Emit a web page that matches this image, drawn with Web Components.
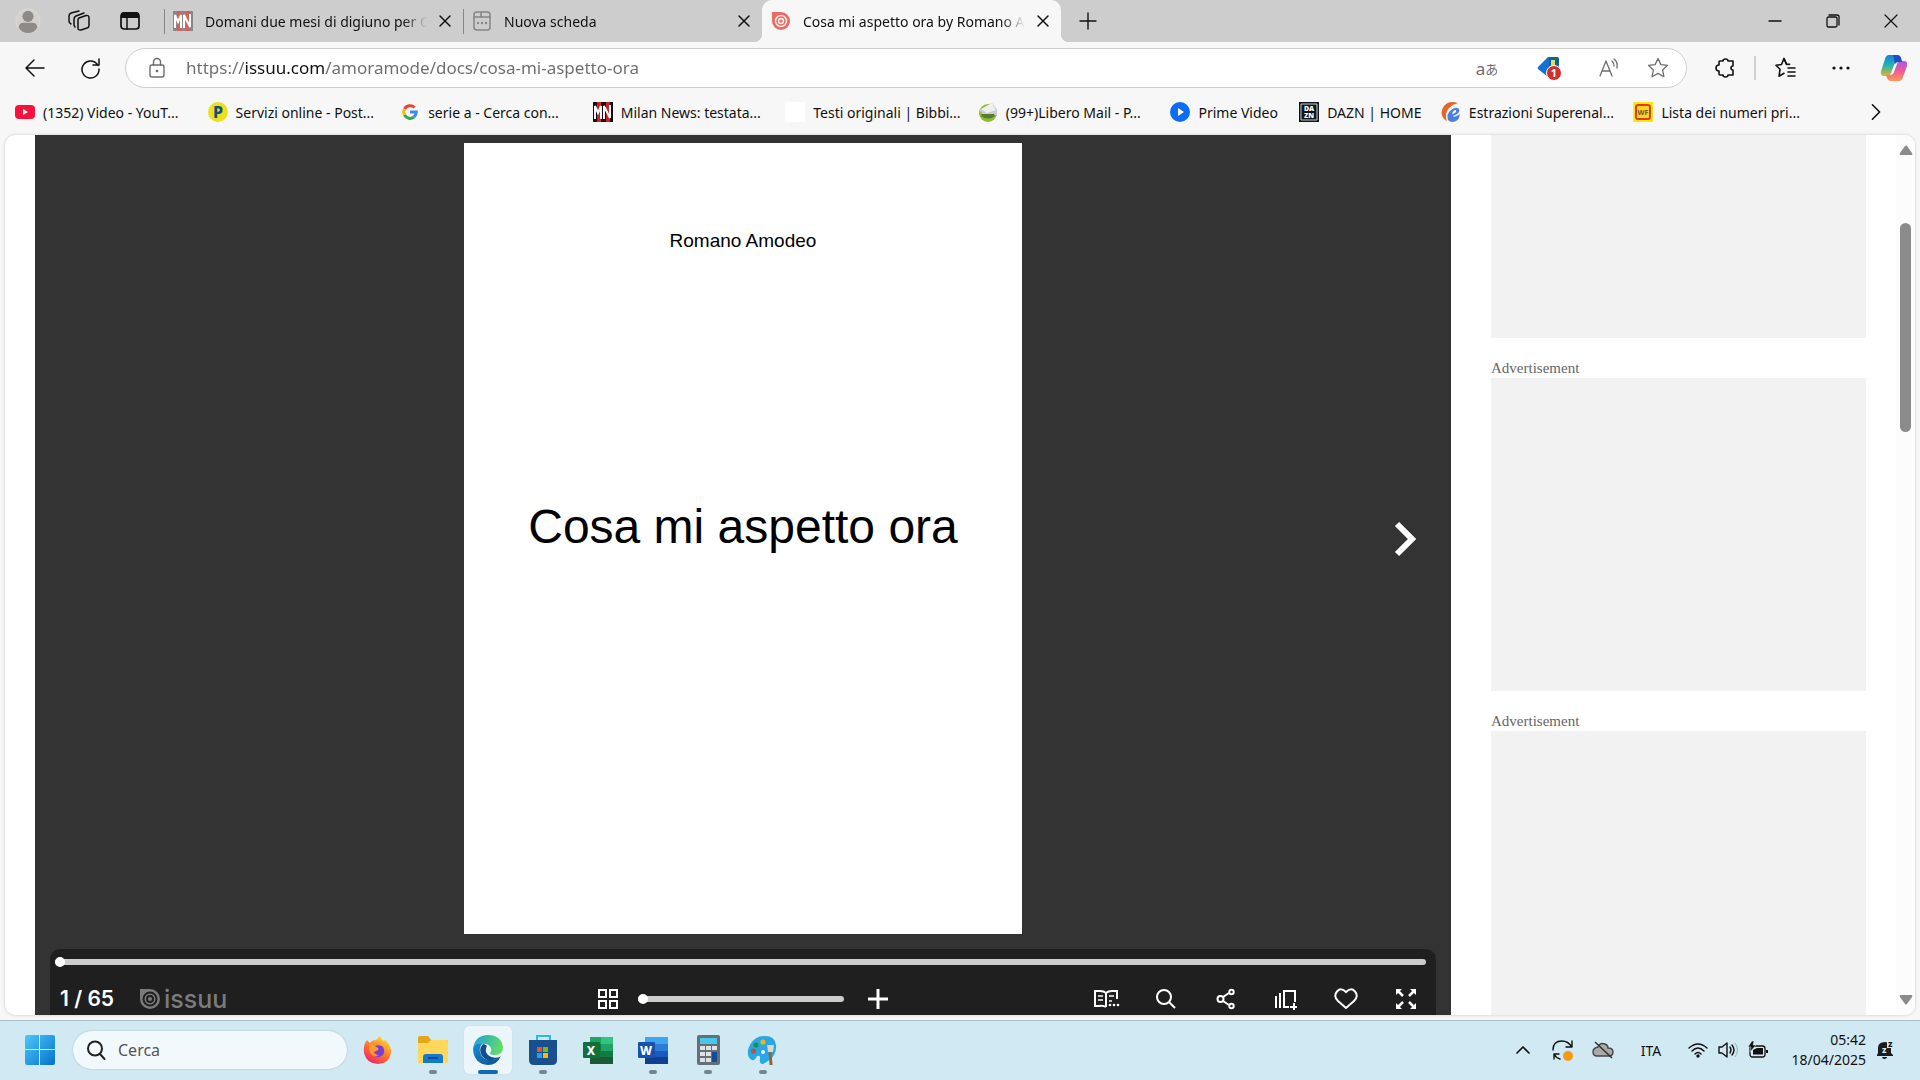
<!DOCTYPE html>
<html lang="it">
<head>
<meta charset="utf-8">
<title>Cosa mi aspetto ora by Romano Amodeo - Issuu</title>
<style>
  body {
    margin: 0;
    height: 100vh;
    display: flex;
    flex-direction: column;
    overflow: hidden;
    background: #f7f7f7;
    color: #111;
    font-family: "Noto Sans", "Open Sans", sans-serif;
    font-size: 14px;
  }
</style>
</head>
<body>
<tab-strip>
  <browser-tab icon="mn-faded">Domani due mesi di digiuno per Gaza</browser-tab>
  <browser-tab icon="new-page">Nuova scheda</browser-tab>
  <browser-tab icon="issuu-tab" active>Cosa mi aspetto ora by Romano Amodeo</browser-tab>
</tab-strip>
<nav-bar></nav-bar>
<favorites-bar>
  <fav-link icon="youtube">(1352) Video - YouT...</fav-link>
  <fav-link icon="poste">Servizi online - Post...</fav-link>
  <fav-link icon="google">serie a - Cerca con...</fav-link>
  <fav-link icon="mn">Milan News: testata...</fav-link>
  <fav-link icon="blank">Testi originali | Bibbi...</fav-link>
  <fav-link icon="libero">(99+)Libero Mail - P...</fav-link>
  <fav-link icon="prime">Prime Video</fav-link>
  <fav-link icon="dazn">DAZN | HOME</fav-link>
  <fav-link icon="superenalotto">Estrazioni Superenal...</fav-link>
  <fav-link icon="wf">Lista dei numeri pri...</fav-link>
</favorites-bar>
<web-page>
  <doc-viewer>
    <span slot="author">Romano Amodeo</span>
    <span slot="title">Cosa mi aspetto ora</span>
  </doc-viewer>
  <ad-slot slot="ads" short></ad-slot>
  <ad-slot slot="ads">Advertisement</ad-slot>
  <ad-slot slot="ads">Advertisement</ad-slot>
</web-page>
<task-bar></task-bar>

<script>
const round = 'fill="none" stroke-linecap="round" stroke-linejoin="round"';
const line = `${round} stroke="currentColor"`;

const icons = {
  profile: `<svg viewBox="0 0 28 28"><circle cx="14" cy="14" r="13" fill="#d4d0cc" stroke="#dedad6"/><circle cx="14" cy="9" r="6" fill="#8d8a87"/><path d="M4 21c0-3 2-5 5-5h10c3 0 5 2 5 5-2 4-6 6-10 6s-8-2-10-6z" fill="#8d8a87"/></svg>`,
  workspaces: `<svg viewBox="0 0 22 22"><g ${line} stroke-width="1.5"><path d="M11 8l7-2.500q3-.5 3 2v8q0 2-2 2.500l-6 2q-3 .5-3-2v-8q0-1.500 1-2z"/><path d="M7 17q-1-1-1-3V9q0-2 2-3l8-3"/><path d="M3 14q-2-1-2-3V6q0-2 2-3l8-2"/></g></svg>`,
  sidetabs: `<svg viewBox="0 0 20 20"><rect x="1" y="2" width="18" height="16" rx="3" ${line} stroke-width="1.700"/><path d="M1 7V4q0-3 3-3h12q3 0 3 3v3z" fill="currentColor"/><path d="M7 7v11" ${line} stroke-width="1.500"/></svg>`,
  "new-page": `<svg viewBox="0 0 20 20"><g ${round} stroke-width="1.500" stroke="#858585"><rect x="2" y="1" width="16" height="18" rx="3"/><path d="M2 6h7V2M9 6h9"/></g><g fill="#858585"><circle cx="6" cy="12" r="1.200"/><circle cx="10" cy="12" r="1.200"/><circle cx="14" cy="12" r="1.200"/></g></svg>`,
  "issuu-tab": `<svg viewBox="0 0 20 20"><path d="M1 1h9a9 9 0 1 1-9 9z" fill="#ea6b62"/><circle cx="10" cy="10" r="5.500" fill="none" stroke="#f9e9e8" stroke-width="1.500"/><circle cx="10" cy="10" r="2.400" fill="none" stroke="#f9e9e8" stroke-width="1.600"/></svg>`,
  close: `<svg viewBox="0 0 12 12"><path d="M1 1l10 10M11 1L1 11" ${line} stroke-width="1.500"/></svg>`,
  plus: `<svg viewBox="0 0 18 18"><path d="M9 1v16M1 9h16" ${line} stroke-width="1.400"/></svg>`,
  minimize: `<svg viewBox="0 0 14 14"><path d="M1 7h12" ${line} stroke-width="1.300"/></svg>`,
  restore: `<svg viewBox="0 0 14 14"><g ${line} stroke-width="1.300"><rect x="1" y="3" width="10" height="10" rx="1.500"/><path d="M3 1h8q2 0 2 2v8"/></g></svg>`,
  exit: `<svg viewBox="0 0 14 14"><path d="M1 1l12 12M13 1L1 13" ${line} stroke-width="1.200"/></svg>`,
  back: `<svg viewBox="0 0 20 20"><path d="M19 10H1M9 2l-8 8 8 8" ${line} stroke-width="1.500"/></svg>`,
  reload: `<svg viewBox="0 0 20 20"><path d="M18 7.500A8.500 8.500 0 1 0 19 11M19 1v6h-6" ${line} stroke-width="1.500"/></svg>`,
  lock: `<svg viewBox="0 0 20 20"><g ${line} stroke-width="1.400"><rect x="3" y="7" width="14" height="12" rx="2"/><path d="M6.500 7V4a3.500 3.500 0 0 1 7 0v3"/></g><circle cx="10" cy="13" r="1.300" fill="currentColor"/></svg>`,
  tag: `<svg viewBox="0 0 26 26"><path d="M2 12L12 2h8q3 0 3 3v17H12L2 14q-1-1 0-2z" fill="#1572d3"/><path d="M13 2h8q2 0 2 3v5H13z" fill="#12618e"/><path d="M15 5h4v7h-4z" fill="#d8dc6a"/><circle cx="18" cy="18" r="7.500" fill="#d02f2a" stroke="#fff"/><text x="18" y="22" text-anchor="middle" font-size="11" font-weight="700" fill="#fff">1</text></svg>`,
  read: `<svg viewBox="0 0 20 20"><path d="M1 18L7 3l6 15M3 13h8M13 3q2 2 2 5M15 1q4 3 3 9" ${line} stroke-width="1.300"/></svg>`,
  star: `<svg viewBox="0 0 22 22"><path d="M11 1.500l2.900 6.100 6.600.8-4.900 4.600 1.300 6.700-5.900-3.300-5.900 3.300 1.300-6.700L1.500 8.400l6.600-.8z" ${line} stroke-width="1.300"/></svg>`,
  puzzle: `<svg viewBox="0 0 20 20"><path d="M5 3h3q0-2 2.500-2T13 3h5v5q-2 0-2 2t2 2v5h-5q0 2-2.500 2T8 17H5q-1 0-1-1v-3q-3 0-3-3t3-3V4q0-1 1-1z" ${line} stroke-width="1.600"/></svg>`,
  favorites: `<svg viewBox="0 0 22 22"><g ${line} stroke-width="1.600"><path d="M12 7.500h-.5L9 1.500 6.500 7.500 1 8.300l4 4-1 7 5-3"/><path d="M9 1.500l2.500 5.500 3 .4M13 11h7M13 15h7M13 19h7"/></g></svg>`,
  more: `<svg viewBox="0 0 20 20"><g fill="currentColor"><circle cx="3" cy="10" r="1.600"/><circle cx="10" cy="10" r="1.600"/><circle cx="17" cy="10" r="1.600"/></g></svg>`,
  copilot: `<svg viewBox="0 0 28 28"><defs>
    <linearGradient id="a" x2="0" y2="1"><stop offset="0" stop-color="#1b7fe0"/><stop offset=".5" stop-color="#20b7b0"/><stop offset="1" stop-color="#e8b22c"/></linearGradient>
    <linearGradient id="b" x2="0" y2="1"><stop offset="0" stop-color="#a45be8"/><stop offset=".5" stop-color="#ef5a95"/><stop offset="1" stop-color="#ff9a55"/></linearGradient></defs>
    <path d="M9 1h8q3 0 4 3l1 4h-4q-3 0-4 3l-3 8q-1 3-4 3H4q-4 0-3-5L5 5q1-4 4-4z" fill="url(#a)"/>
    <path d="M19 27h-8q-3 0-4-3l-1-3h4q3 0 4-3l3-8q1-3 4-3h3q4 0 3 5l-4 11q-1 4-4 4z" fill="url(#b)"/>
    <path d="M13 1h4q3 0 4 3l1 4h-4q-2 0-3 2z" fill="#1f4fc4"/></svg>`,
  youtube: `<svg viewBox="0 0 20 20"><rect y="3" width="20" height="14" rx="4" fill="#f6123d"/><path d="M8 7l5 3-5 3z" fill="#fff"/></svg>`,
  poste: `<svg viewBox="0 0 20 20"><circle cx="10" cy="10" r="10" fill="#ece01c"/><text x="10" y="16" text-anchor="middle" font-size="16" font-weight="800" fill="#124f80">P</text></svg>`,
  google: `<svg viewBox="0 0 20 20"><g fill="none" stroke-width="3"><path d="M14.500 5.500A6.300 6.300 0 0 0 4.500 7" stroke="#ea4335"/><path d="M4.500 7a6.300 6.300 0 0 0 0 6" stroke="#fbbc05"/><path d="M4.500 13a6.300 6.300 0 0 0 9.500 2" stroke="#34a853"/><path d="M14 15q2.300-2 2.300-5H10" stroke="#4285f4"/></g></svg>`,
  mn: `<svg viewBox="0 0 20 20"><path d="M0 0h20v20H0z" fill="#180808"/><path d="M4 0h4v20H4zM13 0h4v20h-4z" fill="#d21e28"/><path d="M2 17V4l3 7 3-7v13M11 17V4l6 12V3" fill="none" stroke="#fff" stroke-width="2"/></svg>`,
  blank: `<svg viewBox="0 0 20 20"><path d="M0 0h20v20H0z" fill="#fff"/></svg>`,
  libero: `<svg viewBox="0 0 20 20"><circle cx="10" cy="11" r="9" fill="#8dbb2f"/><path d="M1 8L14 1l5 6v6L6 14z" fill="#c9cdd0"/><path d="M3 7l11-6 4 7-9 3z" fill="#eceeef"/><path d="M3 14q7 5 14 0l-1-2H4z" fill="#5a7b32"/></svg>`,
  prime: `<svg viewBox="0 0 20 20"><circle cx="10" cy="10" r="10" fill="#0c6df2"/><path d="M8 6l6 4-6 4z" fill="#fff"/></svg>`,
  dazn: `<svg viewBox="0 0 20 20"><path d="M0 0h20v20H0z" fill="#0c161b"/><path d="M2 2h16v16H2z" fill="none" stroke="#c8ced0"/><g fill="#fff" font-size="7" font-weight="900" text-anchor="middle"><text x="10" y="9">DA</text><text x="10" y="16">ZN</text></g></svg>`,
  superenalotto: `<svg viewBox="0 0 20 20"><path d="M17 1Q8-2 3 4-2 11 3 17l3 2Q3 12 8 6q4-4 9-5z" fill="#e4672a"/><path d="M7 18q-2-6 3-10 5-4 8-1 2 4-6 7 1 2 7-2-1 8-8 8-2 0-4-2zm4-6q5-1 4-4-3 0-4 4z" fill="#4c80dd"/></svg>`,
  wf: `<svg viewBox="0 0 20 20"><path d="M0 0h20v20H0z" fill="#ffe80a"/><rect x="3" y="3" width="14" height="14" rx="2" fill="#ffd22a" stroke="#df3b16" stroke-width="2"/><text x="10" y="13" text-anchor="middle" font-size="7" font-weight="800" fill="#77612b">WF</text></svg>`,
  chevron: `<svg viewBox="0 0 20 20"><path d="M6 2l8 8-8 8" ${line} stroke-width="1.800"/></svg>`,
  next: `<svg viewBox="0 0 24 36"><path d="M4 3l15 15L4 33" fill="none" stroke="#fff" stroke-width="6"/></svg>`,
  issuu: `<svg viewBox="0 0 20 20"><path d="M0 0h10a10 10 0 1 1-10 10z" fill="#7b7b7b"/><circle cx="10" cy="10" r="6.500" fill="none" stroke="#1f1f1f" stroke-width="2"/><circle cx="10" cy="10" r="3" fill="none" stroke="#1f1f1f" stroke-width="2"/></svg>`,
  grid: `<svg viewBox="0 0 20 20"><path d="M1 1h7v7H1zM12 1h7v7h-7zM1 12h7v7H1zM12 12h7v7h-7z" fill="none" stroke="currentColor" stroke-width="2"/></svg>`,
  "zoom-in": `<svg viewBox="0 0 20 20"><path d="M10 0v20M0 10h20" fill="none" stroke="currentColor" stroke-width="3"/></svg>`,
  book: `<svg viewBox="0 0 26 20"><g fill="none" stroke="currentColor" stroke-width="2"><path d="M13 18q-3-2-7-1H2V2h5q4 0 6 2v14M13 4q2-2 6-2h5v8"/><path d="M5 7h5M5 11h5M16 7h5M16 12h3" stroke-width="1.700"/></g><g fill="currentColor"><circle cx="17" cy="16" r="1.300"/><circle cx="21" cy="16" r="1.300"/><circle cx="25" cy="16" r="1.300"/></g></svg>`,
  find: `<svg viewBox="0 0 20 20"><g fill="none" stroke="currentColor" stroke-width="2"><circle cx="8" cy="8" r="7"/><path d="M13 13l6 6"/></g></svg>`,
  share: `<svg viewBox="0 0 20 20"><g fill="none" stroke="currentColor" stroke-width="2"><circle cx="4.500" cy="10" r="3"/><circle cx="15.500" cy="3" r="2.200"/><circle cx="15.500" cy="17" r="2.200"/><path d="M7 8l6-4M7 12l6 4"/></g></svg>`,
  stack: `<svg viewBox="0 0 24 22"><g fill="none" stroke="currentColor" stroke-width="2"><path d="M2 8v12M6 5v15M15 19h-5V3h11v11M20 15v7M16 19h7"/></g></svg>`,
  heart: `<svg viewBox="0 0 24 22"><path d="M12 20L4 13Q-1 8 3 3.500t9 .5q5-5 9-.5t-1 9.500z" fill="none" stroke="currentColor" stroke-width="2"/></svg>`,
  fullscreen: `<svg viewBox="0 0 20 20"><path d="M0 0h6L0 6zM20 0v6l-6-6zM0 20v-6l6 6zM20 20h-6l6-6z" fill="currentColor"/><path d="M2 2l5 5M18 2l-5 5M2 18l5-5M18 18l-5-5" stroke="currentColor" stroke-width="2.500"/></svg>`,
  windows: `<svg viewBox="0 0 30 30"><defs><linearGradient id="a" x2="1" y2="1"><stop offset="0" stop-color="#4cc8f8"/><stop offset="1" stop-color="#0571cf"/></linearGradient></defs><path d="M2 0h12v14H0V2q0-2 2-2zM15 0h13q2 0 2 2v12H15zM0 15h14v15H2q-2 0-2-2zM15 15h15v13q0 2-2 2H15z" fill="url(#a)"/></svg>`,
  search: `<svg viewBox="0 0 20 20"><g fill="none" stroke="#222" stroke-width="2" stroke-linecap="round"><circle cx="9" cy="8.500" r="7"/><path d="M14 14l4.500 5"/></g></svg>`,
  firefox: `<svg viewBox="0 0 30 30"><defs><linearGradient id="a" x1=".8" x2=".2" y2="1"><stop offset="0" stop-color="#ffe23c"/><stop offset=".5" stop-color="#ff7a2a"/><stop offset="1" stop-color="#ee1d6f"/></linearGradient></defs><path d="M4 5l3 3q2-3 6-3 2-1 3-4 2 1 4 5l2-1q7 6 6 13-2 11-13 11T1 18Q0 10 4 5z" fill="url(#a)"/><path d="M11 12q3-3 8-1 3 3 2 7-2 4-6 4-5-1-6-6z" fill="#7b3fd0"/><path d="M6 9q5 0 7 3 3 0 2 3l-4 2q1 3 5 3-6 3-9-3-2-4-1-8z" fill="#ff9a2f"/></svg>`,
  folder: `<svg viewBox="0 0 30 30"><path d="M0 3q0-2 2-2h8l3 4h15q2 0 2 2v20q0 1-1 1H1q-1 0-1-1z" fill="#e3a817"/><path d="M0 8h10l3-3h15q2 0 2 2v20q0 1-1 1H1q-1 0-1-1z" fill="#ffd75a"/><path d="M5 28v-6q0-3 3-3h14q3 0 3 3v6z" fill="#1479cf"/><path d="M10 23h10" stroke="#0a4d96" stroke-width="2"/></svg>`,
  edge: `<svg viewBox="0 0 30 30"><defs><linearGradient id="a" x2="1" y2=".3"><stop offset="0" stop-color="#1a9ce0"/><stop offset="1" stop-color="#5fdc6a"/></linearGradient><linearGradient id="b" x2="1" y2="1"><stop offset="0" stop-color="#1490dc"/><stop offset="1" stop-color="#114a8c"/></linearGradient></defs><path d="M0 14Q2 0 15 0t15 12q0 8-8 8-5 0-5-2 2-2 1-5-3-5-9-4T0 14z" fill="url(#a)"/><path d="M0 14q2-6 9-5-3 3-2 8 2 8 10 8 6 0 11-4-4 9-13 9Q1 29 0 14z" fill="url(#b)"/><path d="M10 9q-5 5-1 12 6 8 18 1-8 2-12-2-4-4-1-9-2-2-4-2z" fill="#124f91"/></svg>`,
  store: `<svg viewBox="0 0 30 30"><path d="M9 6V1h13v5" fill="none" stroke="#38b3ea" stroke-width="2"/><path d="M1 5h28v20q0 5-5 5H6q-5 0-5-5z" fill="#174f8f"/><path d="M9 12h5v5H9z" fill="#f25022"/><path d="M15 12h5v5h-5z" fill="#7fba00"/><path d="M9 18h5v5H9z" fill="#18a4ef"/><path d="M15 18h5v5h-5z" fill="#ffb900"/></svg>`,
  excel: `<svg viewBox="0 0 30 30"><path d="M7 2h11v7H7z" fill="#21a366"/><path d="M18 2h12v7H18z" fill="#33c481"/><path d="M7 9h11v13H7z" fill="#107c41"/><path d="M18 9h12v7H18z" fill="#21a366"/><path d="M18 16h12v7H18z" fill="#107c41"/><path d="M7 22h23v7H7z" fill="#185c37"/><rect y="7" width="17" height="16" rx="1" fill="#0f7139"/><text x="8" y="20" text-anchor="middle" font-size="12" font-weight="800" fill="#fff">X</text></svg>`,
  word: `<svg viewBox="0 0 30 30"><path d="M7 2h23v7H7z" fill="#41a5ee"/><path d="M7 9h23v7H7z" fill="#2b7cd3"/><path d="M7 16h23v7H7z" fill="#185abd"/><path d="M7 22h23v7H7z" fill="#103f91"/><rect y="7" width="17" height="16" rx="1" fill="#1752ae"/><text x="8" y="20" text-anchor="middle" font-size="12" font-weight="800" fill="#fff">W</text></svg>`,
  calculator: `<svg viewBox="0 0 30 30"><rect x="4" width="23" height="30" rx="2" fill="#646f77"/><path d="M7 3h17v6H7z" fill="#47c7ec"/><path d="M7 11h5v4H7zM13 11h5v4h-5zM19 11h5v4h-5zM7 17h5v4H7zM13 17h5v4h-5zM7 23h5v4H7zM13 23h5v4h-5z" fill="#dfe2e5"/><path d="M19 17h5v10h-5z" fill="#164c94"/></svg>`,
  paint: `<svg viewBox="0 0 30 30"><path d="M17 1q10 0 11 9 1 10-8 16l-5 3q-4 0-3-5 1-4-3-3-2 5-5 4-5-2-4-10Q4 1 17 1z" fill="#28a6e6"/><circle cx="15" cy="7" r="2.600" fill="#f3b21c"/><circle cx="8" cy="10" r="2.600" fill="#179546"/><circle cx="5.500" cy="16" r="2.600" fill="#b5583e"/><circle cx="15" cy="17" r="2" fill="#eef8fc"/><path d="M22 16l1 14" stroke="#96613a" stroke-width="3"/><path d="M19 10h7l-1 7h-5z" fill="#ded8ca"/></svg>`,
  up: `<svg viewBox="0 0 14 14"><path d="M1 10l6-6 6 6" ${line} stroke-width="1.700"/></svg>`,
  sync: `<svg viewBox="0 0 22 22"><g ${line} stroke-width="1.400"><path d="M1 11q0-9 9-9 6 0 10 6M20 2v6h-6M8 20q-4-1-6-5M2 20v-5h5"/></g><circle cx="16" cy="17" r="5" fill="#f79a11"/></svg>`,
  cloud: `<svg viewBox="0 0 22 20"><path d="M5 16q-4 0-4-4t5-5q2-5 7-3 3 1 3 4 5 0 5 4t-4 4z" fill="#aaa9aa" stroke="#454545" stroke-width="1.400"/><path d="M3 2l17 16" stroke="#333" stroke-width="1.500"/></svg>`,
  wifi: `<svg viewBox="0 0 20 18"><path d="M1 7q9-8 18 0M4 10q6-6 12 0M7 13q3-3 6 0" ${line} stroke-width="1.500"/><circle cx="10" cy="15" r="1.700" fill="currentColor"/></svg>`,
  speaker: `<svg viewBox="0 0 20 18"><path d="M1 6h3l5-4v14l-5-4H1zM12 6q2 3 0 6M14 4q4 5 0 10" ${line} stroke-width="1.400"/><path d="M17 2q5 7 0 14" fill="none" stroke="#9fb0b7"/></svg>`,
  battery: `<svg viewBox="0 0 20 18"><rect x="2" y="5" width="15" height="11" rx="2.500" ${line} stroke-width="1.300"/><path d="M5 13V9l4-2h6v6.500H5zM18 9h2v3h-2z" fill="currentColor"/><path d="M4 0L0 6h3l-1 5 6-7H5l1-4z" fill="currentColor" stroke="#d1e9f2" stroke-width=".5"/></svg>`,
  bell: `<svg viewBox="0 0 18 20"><path d="M2 8q0-6 7-6 6 0 6 6v5l2 2v1H1v-1l1-2zM6 17h5q0 2-2.500 2T6 17z" fill="#1c1c1c"/><path d="M11 0h7v8h-7z" fill="#d1e9f2"/><g font-weight="800" fill="#1c1c1c"><text x="12" y="7" font-size="9">z</text><text x="6" y="13" font-size="9" fill="#d1e9f2">z</text></g></svg>`
};
icons["mn-faded"] = icons.mn.replace("#180808", "#888").replace("#d21e28", "#e05a5a");

class UiIcon extends HTMLElement {
  connectedCallback() {
    if (this.shadowRoot) return;
    const width = this.getAttribute("width") || 20;
    const height = this.getAttribute("height") || width;
    this.attachShadow({ mode: "open" }).innerHTML = `
      <style>
        :host { display: block; flex: none; width: ${width}px; height: ${height}px; }
        svg { display: block; width: 100%; height: 100%; overflow: visible; }
      </style>${icons[this.getAttribute("name")]}`;
  }
}
customElements.define("ui-icon", UiIcon);

const buttonReset = `
  button {
    display: flex;
    align-items: center;
    justify-content: center;
    flex: none;
    margin: 0;
    padding: 0;
    border: 0;
    background: none;
    color: inherit;
    font: inherit;
  }`;

const define = (name, markup) => {
  const template = document.createElement("template");
  template.innerHTML = markup;
  customElements.define(name, class extends HTMLElement {
    constructor() {
      super();
      this.attachShadow({ mode: "open" });
      this.shadowRoot.appendChild(template.content.cloneNode(true));
    }
  });
};

// Browser window

define("tab-strip", `
<style>
  ${buttonReset}
  :host { display: flex; flex: none; height: 42px; padding-left: 2px; background: #cdcdcd; }
  .tools, .window { display: flex; flex: none; }
  .tools { margin-right: 9px; }
  .tools button { width: 51px; }
  .tabs { display: flex; flex: 0 1 897px; min-width: 0; }
  .add { width: 54px; }
  .window { margin-left: auto; }
  .window button { width: 58px; }
</style>
<div class="tools">
  <button aria-label="Profilo"><ui-icon name="profile" width="26"></ui-icon></button>
  <button aria-label="Aree di lavoro"><ui-icon name="workspaces" width="22"></ui-icon></button>
  <button aria-label="Schede"><ui-icon name="sidetabs" width="20"></ui-icon></button>
</div>
<div class="tabs"><slot></slot></div>
<button class="add" aria-label="Nuova scheda"><ui-icon name="plus" width="18"></ui-icon></button>
<div class="window">
  <button aria-label="Riduci a icona"><ui-icon name="minimize" width="14"></ui-icon></button>
  <button aria-label="Ripristina"><ui-icon name="restore" width="14"></ui-icon></button>
  <button aria-label="Chiudi"><ui-icon name="exit" width="14"></ui-icon></button>
</div>`);

class BrowserTab extends HTMLElement {
  connectedCallback() {
    if (this.shadowRoot) return;
    this.attachShadow({ mode: "open" }).innerHTML = `
      <style>
        ${buttonReset}
        :host {
          position: relative;
          display: flex;
          flex: 1 1 0;
          align-items: center;
          min-width: 0;
          box-sizing: border-box;
          padding-left: 8px;
          border-left: 1px solid transparent;
          border-image: linear-gradient(transparent 22%, #888 22% 80%, transparent 80%) 1;
        }
        :host([active]) {
          border-image: none;
          border-radius: 10px 10px 0 0;
          background: #f7f7f7;
        }
        :host([active])::before, :host([active])::after {
          content: "";
          position: absolute;
          bottom: 0;
          width: 8px;
          height: 8px;
        }
        :host([active])::before { left: -9px; background: radial-gradient(circle at 0 0, transparent 8px, #f7f7f7 8px); }
        :host([active])::after { right: -8px; background: radial-gradient(circle at 100% 0, transparent 8px, #f7f7f7 8px); }
        .title {
          flex: 1;
          min-width: 0;
          margin-left: 12px;
          overflow: hidden;
          white-space: nowrap;
          -webkit-mask-image: linear-gradient(90deg, #000 calc(100% - 24px), transparent);
          mask-image: linear-gradient(90deg, #000 calc(100% - 24px), transparent);
        }
        button { width: 36px; height: 36px; }
      </style>
      <ui-icon name="${this.getAttribute("icon")}"></ui-icon>
      <div class="title"><slot></slot></div>
      <button aria-label="Chiudi scheda"><ui-icon name="close" width="12"></ui-icon></button>`;
  }
}
customElements.define("browser-tab", BrowserTab);

define("nav-bar", `
<style>
  ${buttonReset}
  :host { display: flex; flex: none; align-items: center; height: 52px; padding-left: 7px; }
  button { width: 55px; height: 40px; }
  .address {
    display: flex;
    flex: 1;
    align-items: center;
    min-width: 0;
    height: 40px;
    margin: 0 10px 0 8px;
    padding: 0 4px;
    box-sizing: border-box;
    border: 1px solid #cfcfcf;
    border-radius: 20px;
    background: #fff;
    color: #6c6c6c;
  }
  .address button { width: 54px; height: 36px; }
  .address .tag { width: 70px; }
  .address .small { width: 49px; }
  /* The host name of the address is darker than the rest of it. */
  input {
    flex: 1;
    min-width: 0;
    padding: 0 2px;
    border: 0;
    outline: 0;
    background: linear-gradient(90deg, #6c6c6c 61px, #111 61px 142px, #6c6c6c 142px);
    -webkit-background-clip: text;
    background-clip: text;
    -webkit-text-fill-color: transparent;
    font: inherit;
    font-size: 17px;
    line-height: 24px;
  }
  .translate { font-family: "Noto Sans", "Noto Sans CJK JP", sans-serif; font-size: 17px; }
  .translate small { font-size: 13px; }
  i { width: 2px; height: 24px; margin: 0 2px; background: #d0d0d0; }
  .copilot { width: 52px; }
</style>
<button aria-label="Indietro"><ui-icon name="back"></ui-icon></button>
<button aria-label="Aggiorna"><ui-icon name="reload"></ui-icon></button>
<div class="address">
  <button aria-label="Informazioni sul sito"><ui-icon name="lock"></ui-icon></button>
  <input type="text" aria-label="Indirizzo" value="https://issuu.com/amoramode/docs/cosa-mi-aspetto-ora">
  <button class="translate" aria-label="Traduci">a<small>あ</small></button>
  <button class="tag" aria-label="Acquisti"><ui-icon name="tag" width="26"></ui-icon></button>
  <button class="small" aria-label="Lettura ad alta voce"><ui-icon name="read"></ui-icon></button>
  <button class="small" aria-label="Aggiungi ai preferiti"><ui-icon name="star" width="22"></ui-icon></button>
</div>
<button aria-label="Estensioni"><ui-icon name="puzzle"></ui-icon></button>
<i></i>
<button aria-label="Preferiti"><ui-icon name="favorites" width="22"></ui-icon></button>
<button aria-label="Impostazioni e altro"><ui-icon name="more"></ui-icon></button>
<button class="copilot" aria-label="Copilot"><ui-icon name="copilot" width="28"></ui-icon></button>`);

define("favorites-bar", `
<style>
  ${buttonReset}
  :host { display: flex; flex: none; height: 36px; padding: 0 24px 0 15px; }
  nav {
    display: grid;
    flex: 1;
    grid-template-columns: repeat(6, 193fr) 129fr 142fr 193fr 193fr;
    margin-right: 30px;
  }
  button { width: 40px; }
</style>
<nav><slot></slot></nav>
<button aria-label="Altri preferiti"><ui-icon name="chevron" width="18"></ui-icon></button>`);

class FavLink extends HTMLElement {
  connectedCallback() {
    if (this.shadowRoot) return;
    this.attachShadow({ mode: "open" }).innerHTML = `
      <style>
        :host { display: flex; min-width: 0; }
        a {
          display: flex;
          align-items: center;
          gap: 8px;
          color: inherit;
          text-decoration: none;
          white-space: nowrap;
        }
      </style>
      <a href="#"><ui-icon name="${this.getAttribute("icon")}"></ui-icon><span><slot></slot></span></a>`;
  }
}
customElements.define("fav-link", FavLink);

// Page content

define("web-page", `
<style>
  :host {
    display: flex;
    flex: 1;
    min-height: 0;
    margin: 5px;
    overflow: hidden;
    border-radius: 10px;
    background: #fff;
    box-shadow: 0 0 3px #c4c4c4;
  }
  main { display: flex; flex: 1; min-width: 0; padding-left: 30px; }
  aside { flex: none; width: 375px; margin: 0 30px 0 40px; }
</style>
<main><slot></slot></main>
<aside><slot name="ads"></slot></aside>
<page-scrollbar></page-scrollbar>`);

define("page-scrollbar", `
<style>
  ${buttonReset}
  :host {
    display: flex;
    flex: none;
    flex-direction: column;
    align-items: center;
    width: 19px;
    background: #fcfcfc;
  }
  button { width: 19px; height: 30px; }
  .track { display: grid; flex: 1; grid-template-rows: 58fr 209fr 553fr; }
  .thumb { grid-row: 2; width: 11px; border-radius: 6px; background: #8b8b8b; }
  svg { display: block; width: 14px; height: 10px; fill: #8b8b8b; }
</style>
<button aria-label="Scorri su"><svg viewBox="0 0 14 10"><path d="M6 1q1-1 2 0l5 7q1 2-1 2H2q-2 0-1-2z"/></svg></button>
<div class="track"><div class="thumb"></div></div>
<button aria-label="Scorri giù"><svg viewBox="0 0 14 10"><path d="M6 9q1 1 2 0l5-7q1-2-1-2H2Q0 0 1 2z"/></svg></button>`);

define("ad-slot", `
<style>
  :host { display: block; color: #666; font: 15px/20px "Liberation Serif", serif; }
  .label { padding-top: 20px; }
  .box { height: 313px; background: #f2f2f2; }
  :host([short]) .label { display: none; }
  :host([short]) .box { height: 203px; }
</style>
<div class="label"><slot></slot></div>
<div class="box"></div>`);

define("doc-viewer", `
<style>
  ${buttonReset}
  :host {
    display: flex;
    flex: 1;
    flex-direction: column;
    min-width: 0;
    background: #333;
    color: #fff;
  }
  .stage {
    display: grid;
    flex: 1;
    grid-template-columns: 1fr auto 1fr;
    min-height: 0;
    padding: 8px 0 15px;
  }
  article {
    display: grid;
    grid-column: 2;
    grid-template-rows: 196fr 376fr 219fr;
    width: 558px;
    background: #fff;
    color: #000;
    font-family: "Liberation Sans", sans-serif;
    text-align: center;
  }
  p, h1 { align-self: center; margin: 0; font-weight: 400; }
  p { font-size: 19px; line-height: 24px; }
  h1 { font-size: 48px; line-height: 56px; }
  .next { justify-self: end; width: 92px; }
  .controls {
    flex: none;
    height: 66px;
    margin: 0 15px;
    overflow: hidden;
    border-radius: 10px 10px 0 0;
    background: #1f1f1f;
  }
  .progress { display: flex; align-items: center; height: 26px; padding: 0 10px 0 5px; }
  .row { display: grid; grid-template-columns: 1fr auto 1fr; align-items: center; height: 48px; }
  .left, .middle, .right { display: flex; align-items: center; }
  .left { padding-left: 10px; }
  .count { font: 600 21px/24px Inter, sans-serif; }
  .logo {
    display: flex;
    align-items: center;
    gap: 4px;
    margin-left: 26px;
    color: #7b7b7b;
    font: 500 25px/28px Inter, sans-serif;
    text-decoration: none;
  }
  .middle { gap: 20px; }
  .zoom-in { margin-left: 4px; }
  .right { justify-content: flex-end; }
  .right button { width: 60px; height: 40px; }
  input {
    flex: 1;
    min-width: 0;
    height: 12px;
    margin: 0;
    -webkit-appearance: none;
    appearance: none;
    background: none;
  }
  input::-webkit-slider-runnable-track { height: 6px; border-radius: 3px; background: #ccc; }
  input::-webkit-slider-thumb {
    -webkit-appearance: none;
    width: 10px;
    height: 10px;
    margin-top: -2px;
    border-radius: 50%;
    background: #fff;
  }
  .middle input { flex: none; width: 206px; }
</style>
<div class="stage">
  <article>
    <p><slot name="author"></slot></p>
    <h1><slot name="title"></slot></h1>
  </article>
  <button class="next" aria-label="Pagina successiva"><ui-icon name="next" width="24" height="36"></ui-icon></button>
</div>
<div class="controls">
  <div class="progress"><input type="range" aria-label="Pagina" min="1" max="65" value="1"></div>
  <div class="row">
    <div class="left">
      <span class="count">1 / 65</span>
      <a class="logo" href="#"><ui-icon name="issuu"></ui-icon>issuu</a>
    </div>
    <div class="middle">
      <button aria-label="Miniature"><ui-icon name="grid"></ui-icon></button>
      <input type="range" aria-label="Zoom" value="0">
      <button class="zoom-in" aria-label="Ingrandisci"><ui-icon name="zoom-in"></ui-icon></button>
    </div>
    <div class="right">
      <button aria-label="Articoli"><ui-icon name="book" width="26" height="20"></ui-icon></button>
      <button aria-label="Cerca"><ui-icon name="find"></ui-icon></button>
      <button aria-label="Condividi"><ui-icon name="share"></ui-icon></button>
      <button aria-label="Aggiungi a una raccolta"><ui-icon name="stack" width="24" height="22"></ui-icon></button>
      <button aria-label="Mi piace"><ui-icon name="heart" width="24" height="22"></ui-icon></button>
      <button aria-label="Schermo intero"><ui-icon name="fullscreen"></ui-icon></button>
    </div>
  </div>
</div>`);

// Desktop task bar

class TaskApp extends HTMLElement {
  connectedCallback() {
    if (this.shadowRoot) return;
    this.attachShadow({ mode: "open" }).innerHTML = `
      <style>
        ${buttonReset}
        :host { display: block; flex: none; }
        button { position: relative; width: 48px; height: 48px; border-radius: 5px; }
        :host([running]) button::after {
          content: "";
          position: absolute;
          bottom: 0;
          width: 8px;
          height: 4px;
          border-radius: 2px;
          background: #74858d;
        }
        :host([active]) button { background: #ecf6fa; box-shadow: 0 0 1px #a8c4d0; }
        :host([active]) button::after { width: 20px; background: #0f6cbd; }
      </style>
      <button aria-label="${this.getAttribute("label")}"><ui-icon name="${this.getAttribute("icon")}" width="30"></ui-icon></button>`;
  }
}
customElements.define("task-app", TaskApp);

define("task-bar", `
<style>
  ${buttonReset}
  :host {
    display: flex;
    flex: none;
    align-items: center;
    height: 60px;
    padding: 0 25px 1px 15px;
    box-sizing: border-box;
    border-top: 1px solid #a9bfc8;
    background: #d1e9f2;
  }
  .start { width: 50px; height: 48px; }
  label {
    display: flex;
    flex: 0 1 271px;
    align-items: center;
    gap: 12px;
    height: 38px;
    margin: 0 7px 0 8px;
    padding-left: 13px;
    box-sizing: border-box;
    border-radius: 20px;
    background: #f2f9fc;
    box-shadow: 0 0 2px #9db6c0;
  }
  input {
    flex: 1;
    min-width: 0;
    padding: 0;
    border: 0;
    outline: 0;
    background: none;
    font: inherit;
    font-size: 16px;
  }
  input::placeholder { color: #555; opacity: 1; }
  .apps { display: flex; gap: 7px; }
  .tray { display: flex; align-items: center; margin-left: auto; }
  .tray button { width: 40px; height: 48px; }
  .tray .language { width: 56px; margin-right: 4px; }
  .tray .status { width: 30px; }
  .tray .clock {
    flex-direction: column;
    align-items: flex-end;
    width: 86px;
    margin: 0 9px 0 7px;
    line-height: 20px;
  }
  .tray .bell { width: 20px; }
</style>
<button class="start" aria-label="Start"><ui-icon name="windows" width="30"></ui-icon></button>
<label><ui-icon name="search"></ui-icon><input type="text" placeholder="Cerca" aria-label="Cerca"></label>
<div class="apps">
  <task-app icon="firefox" label="Firefox"></task-app>
  <task-app icon="folder" label="Esplora file" running></task-app>
  <task-app icon="edge" label="Microsoft Edge" running active></task-app>
  <task-app icon="store" label="Microsoft Store" running></task-app>
  <task-app icon="excel" label="Excel"></task-app>
  <task-app icon="word" label="Word" running></task-app>
  <task-app icon="calculator" label="Calcolatrice" running></task-app>
  <task-app icon="paint" label="Paint" running></task-app>
</div>
<div class="tray">
  <button aria-label="Mostra icone nascoste"><ui-icon name="up" width="14"></ui-icon></button>
  <button aria-label="Aggiornamenti"><ui-icon name="sync" width="22"></ui-icon></button>
  <button aria-label="OneDrive"><ui-icon name="cloud" width="22" height="20"></ui-icon></button>
  <button class="language">ITA</button>
  <button class="status" aria-label="Rete"><ui-icon name="wifi" width="20" height="18"></ui-icon></button>
  <button class="status" aria-label="Volume"><ui-icon name="speaker" width="20" height="18"></ui-icon></button>
  <button class="status" aria-label="Batteria"><ui-icon name="battery" width="20" height="18"></ui-icon></button>
  <button class="clock"><span>05:42</span><span>18/04/2025</span></button>
  <button class="bell" aria-label="Notifiche"><ui-icon name="bell" width="18" height="20"></ui-icon></button>
</div>`);
</script>
</body>
</html>
